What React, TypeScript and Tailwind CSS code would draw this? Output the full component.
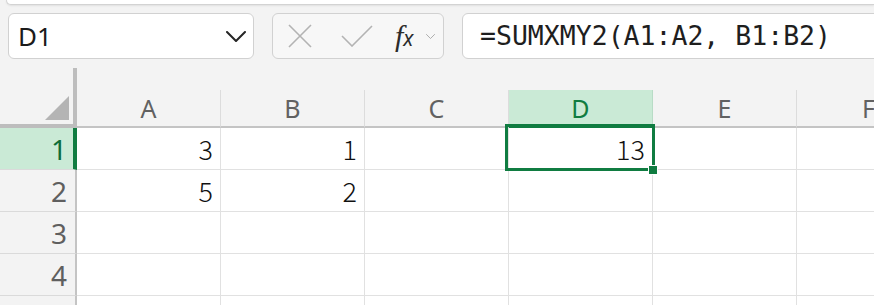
import React from 'react';

const cols = ['A', 'B', 'C', 'D', 'E', 'F'];

const rows: { n: number; cells: Record<string, string> }[] = [
    { n: 1, cells: { A: '3', B: '1', D: '13' } },
    { n: 2, cells: { A: '5', B: '2' } },
    { n: 3, cells: {} },
    { n: 4, cells: {} },
    { n: 5, cells: {} },
];

function ChevronDown({ className }: { className?: string }) {
    return (
        <svg viewBox="0 0 20 11" className={className} fill="none">
            <path d="M1 1 L10 10 L19 1" stroke="currentColor" strokeWidth="2" strokeLinecap="round" strokeLinejoin="round" />
        </svg>
    );
}

function FormulaBar() {
    return (
        <div className="flex items-center h-[46px] mt-[8px] pl-[8px] gap-[18px]">
            {/* name box */}
            <div className="flex items-center justify-between w-[246px] h-[46px] shrink-0 bg-white border border-[#d1d1d1] rounded-[6px] pl-[9px] pr-[7px]">
                <span className="text-[26px] leading-none text-[#1b1b1b]" style={{ fontFamily: '"Noto Sans", sans-serif' }}>D1</span>
                <ChevronDown className="w-[20px] h-[11px] text-[#262626]" />
            </div>

            {/* cancel / enter / fx */}
            <div className="flex items-center w-[172px] h-[46px] shrink-0 bg-[#f7f7f7] border border-[#d1d1d1] rounded-[6px] pl-[15px]">
                <svg viewBox="0 0 24 24" className="w-[24px] h-[24px]" fill="none">
                    <path d="M1 1 L23 23 M23 1 L1 23" stroke="#b3b3b3" strokeWidth="1.6" />
                </svg>
                <svg viewBox="0 0 32 22" className="w-[32px] h-[22px] ml-[29px]" fill="none">
                    <path d="M1 11 L11 21 L31 1" stroke="#b3b3b3" strokeWidth="1.6" />
                </svg>
                <span className="ml-[22px] text-[30px] leading-none italic text-[#2b2b2b]" style={{ fontFamily: '"Liberation Serif", serif' }}>
                    f<span className="text-[21px] italic" style={{ fontFamily: '"Noto Sans", sans-serif' }}>x</span>
                </span>
                <ChevronDown className="w-[9px] h-[5px] ml-[12px] text-[#a6a6a6]" />
            </div>

            {/* formula */}
            <div className="flex items-center w-[440px] h-[46px] shrink-0 bg-white border border-[#d1d1d1] rounded-[6px] pl-[17px]">
                <span className="text-[26.5px] leading-none text-[#1e1e1e] whitespace-pre" style={{ fontFamily: '"DejaVu Sans Mono", monospace' }}>
                    =SUMXMY2(A1:A2, B1:B2)
                </span>
            </div>
        </div>
    );
}

function Grid() {
    return (
        <div className="mt-[9px]">
            {/* column header */}
            <div className="flex h-[60px]">
                <div className="w-[77px] h-[60px] shrink-0 flex items-end justify-end pr-[4px] pb-[4px] bg-[#f3f3f3] border-r-4 border-b-4 border-[#bdbdbd]">
                    <svg viewBox="0 0 24 24" className="w-[24px] h-[24px]">
                        <polygon points="24,0 24,24 0,24" fill="#b4b4b4" />
                    </svg>
                </div>
                {cols.map(c => (
                    <div
                        key={c}
                        className={`self-end w-[144px] h-[38px] shrink-0 flex items-center justify-center border-r border-b-2 text-[25px] leading-none ${
                            c === 'D'
                                ? 'bg-[#caead6] border-r-[#b8dcc6] border-b-[#107c41] text-[#107c41]'
                                : 'bg-[#f3f3f3] border-r-[#dcdcdc] border-b-[#c4c4c4] text-[#616161]'
                        }`}
                        style={{ fontFamily: '"Noto Sans", sans-serif' }}
                    >
                        {c}
                    </div>
                ))}
            </div>

            {/* rows */}
            {rows.map(r => (
                <div key={r.n} className="flex h-[42px]">
                    <div
                        className={`w-[77px] h-[42px] shrink-0 flex items-center justify-end border-b border-b-[#dadada] text-[28px] leading-none ${
                            r.n === 1
                                ? 'bg-[#caead6] border-r-4 border-r-[#107c41] text-[#0f6d39] pr-[6px]'
                                : 'bg-[#f3f3f3] border-r-2 border-r-[#c4c4c4] text-[#5f5f5f] pr-[8px]'
                        }`}
                        style={{ fontFamily: '"Noto Sans", sans-serif' }}
                    >
                        {r.n < 5 ? r.n : ''}
                    </div>
                    {cols.map(c => {
                        const selected = r.n === 1 && c === 'D';
                        return (
                            <div
                                key={c}
                                className={`w-[144px] h-[42px] shrink-0 flex items-center justify-end pr-[7px] bg-white border-r border-b border-[#e1e1e1] text-[27px] leading-none font-light text-[#111] ${
                                    selected ? 'relative z-10' : ''
                                }`}
                                style={{ fontFamily: '"Noto Sans CJK JP", "Noto Sans", sans-serif' }}
                            >
                                {r.cells[c] ?? ''}
                                {selected && (
                                    <>
                                        <div className="absolute left-[-4px] top-[-4px] w-[150px] h-[47px] border-[3px] border-[#107c41] pointer-events-none" />
                                        <div className="absolute left-[139px] top-[37px] w-[10px] h-[10px] bg-[#107c41] border border-white" />
                                    </>
                                )}
                            </div>
                        );
                    })}
                </div>
            ))}
        </div>
    );
}

export default function App() {
    return (
        <div className="w-[874px] h-[305px] overflow-hidden bg-[#f3f3f3]">
            <div className="h-[5px] ml-[6px] bg-white rounded-bl-[10px] border-l border-b border-[#d3d3d3] shadow-[0_1px_2px_rgba(0,0,0,0.08)]" />
            <FormulaBar />
            <Grid />
        </div>
    );
}
